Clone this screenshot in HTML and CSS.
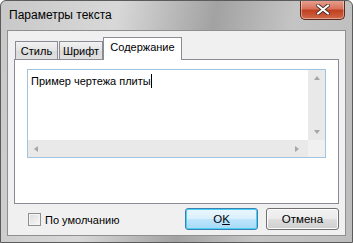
FILE: index.html
```html
<!DOCTYPE html>
<html lang="ru">
<head>
    <meta charset="UTF-8">
    <title>Параметры текста</title>
    <link rel="stylesheet" href="styles.css">
</head>
<body>
    <div class="window">
        <!-- Title bar -->
        <div class="titlebar">
            <span class="title">Параметры текста</span>
            <button class="close-btn">
                <svg width="14" height="11" viewBox="0 0 14 11">
                    <path d="M2 1.5 L12 9.5 M12 1.5 L2 9.5" stroke="#3a2a2a" stroke-width="3.6" stroke-linecap="round"/>
                    <path d="M2 1.5 L12 9.5 M12 1.5 L2 9.5" stroke="#fff" stroke-width="2.2" stroke-linecap="round"/>
                </svg>
            </button>
        </div>

        <!-- Client area -->
        <div class="client">
            <div class="tabs">
                <div class="tab tab-style">Стиль</div>
                <div class="tab tab-font">Шрифт</div>
                <div class="tab tab-content active">Содержание</div>
            </div>
            <div class="panel">
                <div class="memo">
                    <div class="memo-body">
                        <div class="memo-text">Пример чертежа плиты<span class="caret"></span></div>
                        <div class="vscroll">
                            <span class="arrow up"></span>
                            <span class="arrow down"></span>
                        </div>
                    </div>
                    <div class="hscroll">
                        <span class="arrow left"></span>
                        <span class="arrow right"></span>
                        <span class="corner"></span>
                    </div>
                </div>
            </div>
            <div class="footer">
                <label class="check">
                    <span class="box"></span>
                    По умолчанию
                </label>
                <div class="buttons">
                    <button class="btn default">O<u>K</u></button>
                    <button class="btn">Отмена</button>
                </div>
            </div>
        </div>
    </div>
</body>
</html>
```

FILE: styles.css
```css
/* General */
body {
    margin: 0;
    padding: 0;
    font-family: 'Liberation Sans', Arial, sans-serif;
    font-size: 11px;
    color: #000;
    background: #fff;
}

/* Window frame */
.window {
    width: 353px;
    height: 243px;
    box-sizing: border-box;
    border: 1px solid #5b5b5b;
    border-radius: 6px 6px 0 0;
    background: linear-gradient(100deg, #c8c8c8 0%, #d8d8d8 30%, #a2a2a2 55%, #c4c4c4 75%, #bdbdbd 100%);
    display: flex;
    flex-direction: column;
    overflow: hidden;
}

.titlebar {
    height: 29px;
    display: flex;
    align-items: flex-start;
    justify-content: space-between;
    flex-shrink: 0;
}
.title {
    margin: 7px 0 0 8px;
    font-size: 12px;
}
.close-btn {
    width: 45px;
    height: 20px;
    margin: -1px 7px 0 0;
    border: 1px solid #5a2a20;
    border-top: none;
    border-radius: 0 0 5px 5px;
    background: linear-gradient(#e8a493 0%, #d8735c 45%, #c0401f 55%, #d0684a 100%);
    box-shadow: inset 0 0 0 1px rgba(255, 255, 255, 0.4);
    display: flex;
    align-items: center;
    justify-content: center;
    padding: 0;
}

/* Client area */
.client {
    flex: 1;
    margin: 0 6px 6px 6px;
    background: #f0f0f0;
    border: 1px solid #8e8f8f;
    display: flex;
    flex-direction: column;
    padding: 6px 6px 0 6px;
}

/* Tabs */
.tabs {
    display: flex;
    align-items: flex-end;
    height: 22px;
    padding-left: 1px;
    position: relative;
    z-index: 1;
}
.tab {
    box-sizing: border-box;
    height: 18px;
    line-height: 18px;
    text-align: center;
    border: 1px solid #898c95;
    border-bottom: none;
    background: linear-gradient(#f2f2f2, #e3e3e3 50%, #d9d9d9 51%, #e0e0e0);
}
.tab-style {
    width: 43px;
    margin-right: 1px;
}
.tab-font {
    width: 44px;
}
.tab-content {
    width: 79px;
}
.tab.active {
    height: 23px;
    line-height: 19px;
    margin: 0 0 -1px 0;
    background: #fff;
}

.panel {
    height: 134px;
    border: 1px solid #898c95;
    background: #fff;
    padding: 9px 12px 0 12px;
}

/* Memo with scrollbars */
.memo {
    height: 87px;
    border: 1px solid #a0c4e0;
    display: flex;
    flex-direction: column;
}
.memo-body {
    flex: 1;
    display: flex;
}
.memo-text {
    flex: 1;
    padding: 4px 3px;
    line-height: 15px;
}
.caret {
    display: inline-block;
    width: 1px;
    height: 14px;
    background: #000;
    vertical-align: -3px;
}
.vscroll {
    width: 17px;
    background: #e9e9e9;
    display: flex;
    flex-direction: column;
    justify-content: space-between;
    align-items: center;
    padding: 6px 0;
    box-sizing: border-box;
}
.hscroll {
    height: 17px;
    background: #e9e9e9;
    display: flex;
    align-items: center;
    justify-content: space-between;
    padding-left: 6px;
    position: relative;
}
.corner {
    width: 17px;
    height: 17px;
    background: #f0f0f0;
}
.arrow {
    width: 0;
    height: 0;
    border: 3px solid transparent;
}
.arrow.up {
    border-bottom: 4px solid #a6a6a6;
    border-top: none;
}
.arrow.down {
    border-top: 4px solid #a6a6a6;
    border-bottom: none;
}
.arrow.left {
    border-right: 4px solid #a6a6a6;
    border-left: none;
}
.arrow.right {
    border-left: 4px solid #a6a6a6;
    border-right: none;
    margin-left: auto;
    margin-right: 9px;
}

/* Footer */
.footer {
    flex: 1;
    display: flex;
    align-items: center;
    justify-content: space-between;
    padding: 0 0 0 14px;
}
.check {
    display: flex;
    align-items: center;
    gap: 4px;
}
.box {
    width: 11px;
    height: 11px;
    border: 1px solid #8e8f8f;
    background: linear-gradient(135deg, #dcdcdc, #f8f8f8);
    box-shadow: inset 0 0 0 1px #f4f4f4;
}
.buttons {
    display: flex;
    gap: 8px;
    margin-top: -2px;
}
.btn {
    width: 73px;
    height: 22px;
    font-family: inherit;
    font-size: 11.5px;
    border: 1px solid #707070;
    border-radius: 3px;
    background: linear-gradient(#f2f2f2 0%, #ebebeb 50%, #dddddd 51%, #cfcfcf 100%);
    box-shadow: inset 0 0 0 1px #fcfcfc;
    padding: 0;
}
.btn.default {
    border-color: #3c7fb1;
    background: linear-gradient(#eaf6fd 0%, #d9f0fc 50%, #bee6fd 51%, #a7d9f5 100%);
    box-shadow: inset 0 0 0 1px #48d0f5;
}
```
